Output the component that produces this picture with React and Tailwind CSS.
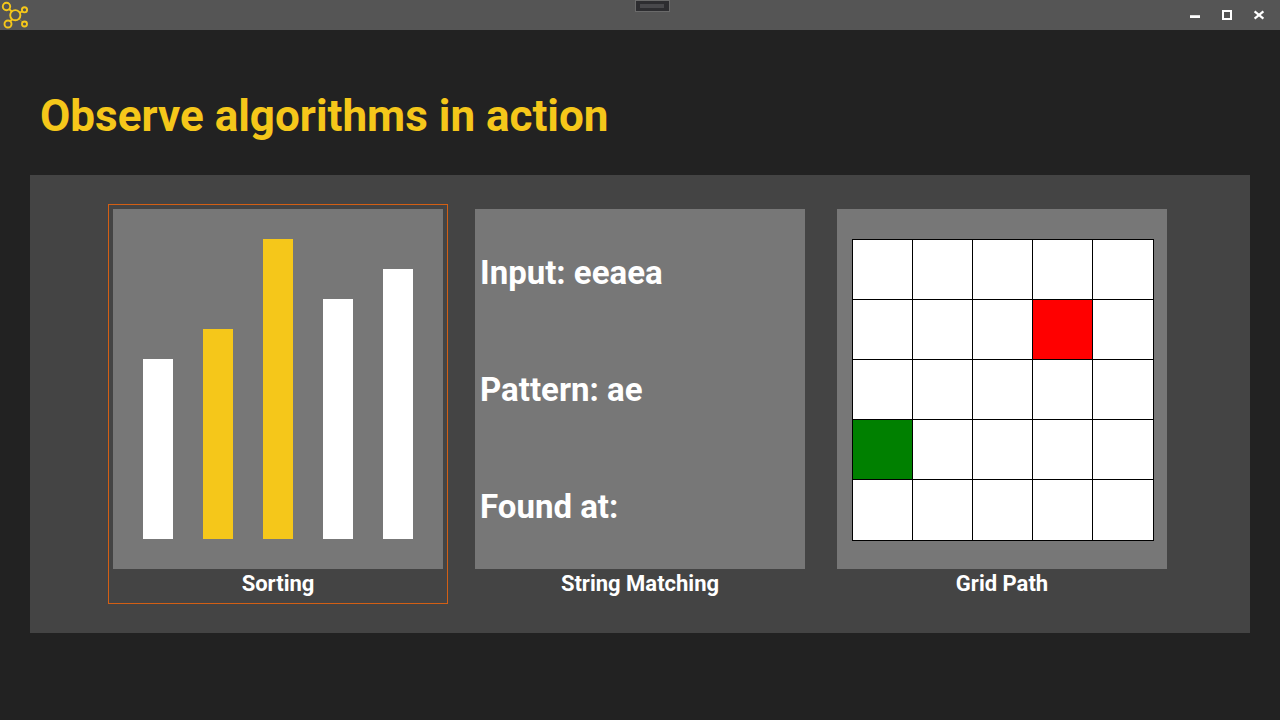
const bars = [
  { size: "h-[180px]", color: "bg-white" },
  { size: "h-[210px]", color: "bg-[#f5c71a]" },
  { size: "h-[300px]", color: "bg-[#f5c71a]" },
  { size: "h-[240px]", color: "bg-white" },
  { size: "h-[270px]", color: "bg-white" },
];

const GOAL_CELL = 8;
const START_CELL = 15;

function Logo() {
  return (
    <svg width="30" height="30" viewBox="0 0 30 30" fill="none" stroke="#f5c71a" strokeWidth="1.9" aria-hidden="true">
      <circle cx="15.3" cy="15.2" r="5.1" />
      <circle cx="6.5" cy="6.5" r="3.7" />
      <circle cx="24.5" cy="9.8" r="2.6" />
      <circle cx="8" cy="24" r="3.5" />
      <circle cx="24.5" cy="24" r="2.5" />
      <path d="M9.2 9.1 11.7 11.5M19.9 12.7 22.2 11.2M12.3 19.3 10.1 21.3" />
      <path d="M19 18.8 22.7 22.2" strokeWidth="1" strokeOpacity="0.4" />
    </svg>
  );
}

function TitleBar() {
  const button = "flex h-[30px] w-8 items-center justify-center";
  return (
    <header className="grid h-[30px] grid-cols-[1fr_auto_1fr] items-start bg-[#555555]">
      <Logo />
      <div className="ml-6 flex h-3 w-[35px] items-center justify-center border border-[#6a6a6a] bg-[#2d2d30]">
        <div className="h-1 w-6 bg-[#48484b]" />
      </div>
      <div className="flex justify-end pr-[5px]">
        <button type="button" aria-label="Minimize" className={button}>
          <svg width="12" height="12" viewBox="0 0 12 12" aria-hidden="true">
            <path d="M1 6.2h10v2.8H1z" fill="#fff" />
          </svg>
        </button>
        <button type="button" aria-label="Maximize" className={button}>
          <svg width="12" height="12" viewBox="0 0 12 12" aria-hidden="true">
            <path d="M2 2h8v8H2z" fill="none" stroke="#fff" strokeWidth="2" />
          </svg>
        </button>
        <button type="button" aria-label="Close" className={button}>
          <svg width="12" height="12" viewBox="0 0 12 12" aria-hidden="true">
            <path d="M1.6 2.3 10.4 9.7M10.4 2.3 1.6 9.7" stroke="#fff" strokeWidth="2.2" />
          </svg>
        </button>
      </div>
    </header>
  );
}

function AlgorithmCard({ title, selected, children }) {
  return (
    <button
      type="button"
      aria-pressed={selected}
      className={`flex w-[340px] flex-col p-[5px] ${selected ? "ring-1 ring-[#d35f14] ring-inset" : ""}`}
    >
      <div className="h-[360px] w-full bg-[#777777]">{children}</div>
      <span className="w-full text-center text-[22px] leading-[30px] font-bold">{title}</span>
    </button>
  );
}

function SortingPreview() {
  return (
    <div className="flex h-full items-end justify-between p-[30px]">
      {bars.map((bar) => (
        <div key={bar.size} className={`w-[30px] ${bar.size} ${bar.color}`} />
      ))}
    </div>
  );
}

function MatchingPreview() {
  return (
    <div className="flex h-full flex-col justify-around px-[5px] pt-[5px] pb-1 text-left text-[33px] leading-10 font-bold">
      <p>Input: eeaea</p>
      <p>Pattern: ae</p>
      <p>Found at:</p>
    </div>
  );
}

function cellColor(index) {
  if (index === GOAL_CELL) return "bg-[#ff0000]";
  if (index === START_CELL) return "bg-[#008000]";
  return "bg-white";
}

function GridPreview() {
  return (
    <div className="px-[15px] py-[30px]">
      <div className="grid w-fit grid-cols-[60px_60px_60px_60px_61px] grid-rows-[60px_60px_60px_60px_61px] border-r border-b border-black">
        {Array.from({ length: 25 }, (_, index) => (
          <div key={index} className={`border-t border-l border-black ${cellColor(index)}`} />
        ))}
      </div>
    </div>
  );
}

export default function App() {
  return (
    <div className="min-h-screen bg-[#222222] font-['Roboto','Liberation_Sans',sans-serif] text-white">
      <TitleBar />
      <main className="px-[30px] pt-14 pb-8">
        <h1 className="px-[10px] text-[44px] leading-[60px] font-bold text-[#f5c71a]">Observe algorithms in action</h1>
        <section aria-label="Algorithms" className="mt-[29px] flex flex-wrap justify-center gap-[22px] bg-[#444444] py-[29px]">
          <AlgorithmCard title="Sorting" selected={true}>
            <SortingPreview />
          </AlgorithmCard>
          <AlgorithmCard title="String Matching" selected={false}>
            <MatchingPreview />
          </AlgorithmCard>
          <AlgorithmCard title="Grid Path" selected={false}>
            <GridPreview />
          </AlgorithmCard>
        </section>
      </main>
    </div>
  );
}
